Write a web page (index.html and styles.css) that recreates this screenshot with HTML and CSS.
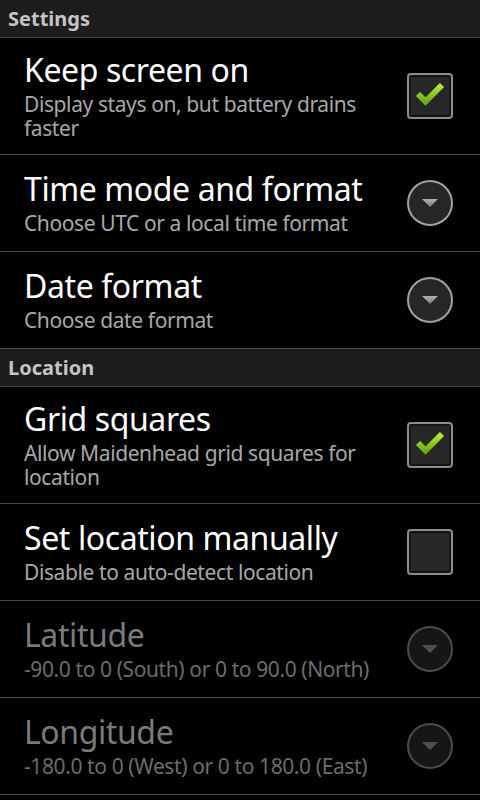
FILE: index.html
```html
<!DOCTYPE html>
<html>
<head>
    <title>Settings</title>
    <link rel="stylesheet" href="styles.css">
</head>
<body>
    <svg width="0" height="0" class="defs">
        <defs>
            <linearGradient id="tick" x1="0" y1="0" x2="0" y2="1">
                <stop offset="0" stop-color="#b4ec3a"/>
                <stop offset="1" stop-color="#6cae12"/>
            </linearGradient>
            <linearGradient id="arrow" x1="0" y1="0" x2="0" y2="1">
                <stop offset="0" stop-color="#b0b0b0"/>
                <stop offset="1" stop-color="#7c7c7c"/>
            </linearGradient>
        </defs>
    </svg>

    <div class="header">Settings</div>

    <div class="pref">
        <div class="text">
            <div class="title">Keep screen on</div>
            <div class="summary">Display stays on, but battery drains faster</div>
        </div>
        <svg class="widget" width="46" height="46" viewBox="0 0 46 46">
            <rect x="1" y="1" width="44" height="44" rx="3" fill="#151515" stroke="#8c8c8c" stroke-width="2"/>
            <rect x="4" y="4" width="38" height="38" fill="#272727"/>
            <path d="M11 21 L18.5 28.5 L35 12" fill="none" stroke="url(#tick)" stroke-width="6"/>
        </svg>
    </div>

    <div class="pref">
        <div class="text">
            <div class="title">Time mode and format</div>
            <div class="summary">Choose UTC or a local time format</div>
        </div>
        <svg class="widget" width="46" height="46" viewBox="0 0 46 46">
            <circle cx="23" cy="23" r="22" fill="#262626" stroke="#a2a2a2" stroke-width="2"/>
            <path d="M15 19 L31 19 L23 27 Z" fill="url(#arrow)"/>
        </svg>
    </div>

    <div class="pref">
        <div class="text">
            <div class="title">Date format</div>
            <div class="summary">Choose date format</div>
        </div>
        <svg class="widget" width="46" height="46" viewBox="0 0 46 46">
            <circle cx="23" cy="23" r="22" fill="#262626" stroke="#a2a2a2" stroke-width="2"/>
            <path d="M15 19 L31 19 L23 27 Z" fill="url(#arrow)"/>
        </svg>
    </div>

    <div class="header">Location</div>

    <div class="pref">
        <div class="text">
            <div class="title">Grid squares</div>
            <div class="summary">Allow Maidenhead grid squares for location</div>
        </div>
        <svg class="widget" width="46" height="46" viewBox="0 0 46 46">
            <rect x="1" y="1" width="44" height="44" rx="3" fill="#151515" stroke="#8c8c8c" stroke-width="2"/>
            <rect x="4" y="4" width="38" height="38" fill="#272727"/>
            <path d="M11 21 L18.5 28.5 L35 12" fill="none" stroke="url(#tick)" stroke-width="6"/>
        </svg>
    </div>

    <div class="pref">
        <div class="text">
            <div class="title">Set location manually</div>
            <div class="summary">Disable to auto-detect location</div>
        </div>
        <svg class="widget" width="46" height="46" viewBox="0 0 46 46">
            <rect x="1" y="1" width="44" height="44" rx="3" fill="#151515" stroke="#8c8c8c" stroke-width="2"/>
            <rect x="4" y="4" width="38" height="38" fill="#272727"/>
        </svg>
    </div>

    <div class="pref disabled">
        <div class="text">
            <div class="title">Latitude</div>
            <div class="summary">-90.0 to 0 (South) or 0 to 90.0 (North)</div>
        </div>
        <svg class="widget" width="46" height="46" viewBox="0 0 46 46">
            <circle cx="23" cy="23" r="22" fill="#161616" stroke="#4c4c4c" stroke-width="2"/>
            <path d="M15 19 L31 19 L23 27 Z" fill="#4e4e4e"/>
        </svg>
    </div>

    <div class="pref disabled">
        <div class="text">
            <div class="title">Longitude</div>
            <div class="summary">-180.0 to 0 (West) or 0 to 180.0 (East)</div>
        </div>
        <svg class="widget" width="46" height="46" viewBox="0 0 46 46">
            <circle cx="23" cy="23" r="22" fill="#161616" stroke="#4c4c4c" stroke-width="2"/>
            <path d="M15 19 L31 19 L23 27 Z" fill="#4e4e4e"/>
        </svg>
    </div>
</body>
</html>
```

FILE: styles.css
```css
body {
    margin: 0;
    background-color: #000;
    color: #fff;
    font-family: "Noto Sans", "Open Sans", sans-serif;
    height: 800px;
    overflow: hidden;
}
.defs {
    position: absolute;
}
.header {
    height: 37px;
    line-height: 37px;
    padding-left: 8px;
    background-color: #1c1c1c;
    border-bottom: 1px solid #4a4a4a;
    color: #c4c4c4;
    font-size: 20px;
    font-weight: bold;
}
.pref {
    display: flex;
    align-items: center;
    min-height: 97px;
    box-sizing: border-box;
    padding: 14px 27px 14px 24px;
    border-bottom: 1px solid #4a4a4a;
}
.text {
    flex: 1;
    padding-right: 12px;
}
.title {
    font-size: 32px;
    line-height: 36px;
    letter-spacing: -0.4px;
    white-space: nowrap;
}
.summary {
    margin-top: 4px;
    font-size: 21px;
    line-height: 24px;
    letter-spacing: -0.4px;
    color: #a8a8a8;
}
.widget {
    flex: none;
    display: block;
}
.disabled .title {
    color: #7a7a7a;
}
.disabled .summary {
    color: #6c6c6c;
}
```
